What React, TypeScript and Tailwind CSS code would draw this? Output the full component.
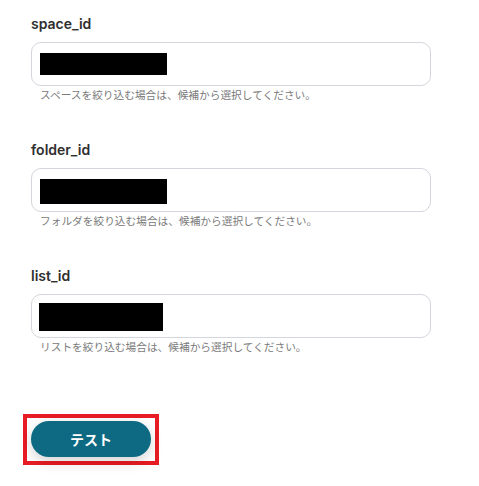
const fields = [
  {
    label: "space_id",
    help: "スペースを絞り込む場合は、候補から選択してください。",
    mask: "mt-[10px] ml-[8px] h-[22px] w-[127px]",
  },
  {
    label: "folder_id",
    help: "フォルダを絞り込む場合は、候補から選択してください。",
    mask: "mt-[10px] ml-[8px] h-[25px] w-[127px]",
  },
  {
    label: "list_id",
    help: "リストを絞り込む場合は、候補から選択してください。",
    mask: "mt-[8px] ml-[7px] h-[28px] w-[124px]",
  },
];

export default function App() {
  return (
    <div className="min-h-[486px] w-full bg-white pl-[31px] pt-[14px] font-['Inter','Noto_Sans_CJK_JP',sans-serif]">
      <div className="flex w-[400px] flex-col gap-[36px]">
        {fields.map((f) => (
          <div key={f.label} className="flex flex-col">
            <label className="h-5 text-[14px] font-semibold leading-5 text-[#2f2f2f]">
              {f.label}
            </label>
            {/* masked value */}
            <div className="mt-2 h-[44px] w-full rounded-[10px] border border-[#d3d6dc] bg-white">
              <div className={`bg-black ${f.mask}`} />
            </div>
            <p className="ml-[9px] mt-[1px] h-[17px] text-[10.7px] leading-4 text-[#7a7a7a] font-['Noto_Sans_CJK_JP',sans-serif]">
              {f.help}
            </p>
          </div>
        ))}
      </div>

      <div className="-ml-2 mt-[58px] inline-block border-4 border-[#e81c24] pb-[4px] pl-[4px] pr-[4px] pt-[3px]">
        <button className="h-[36px] w-[120px] rounded-full bg-[#0d6a82] text-[14px] font-bold text-white shadow-[0_4px_14px_rgba(0,0,0,0.18)] font-['Noto_Sans_CJK_JP',sans-serif]">
          テスト
        </button>
      </div>
    </div>
  );
}
